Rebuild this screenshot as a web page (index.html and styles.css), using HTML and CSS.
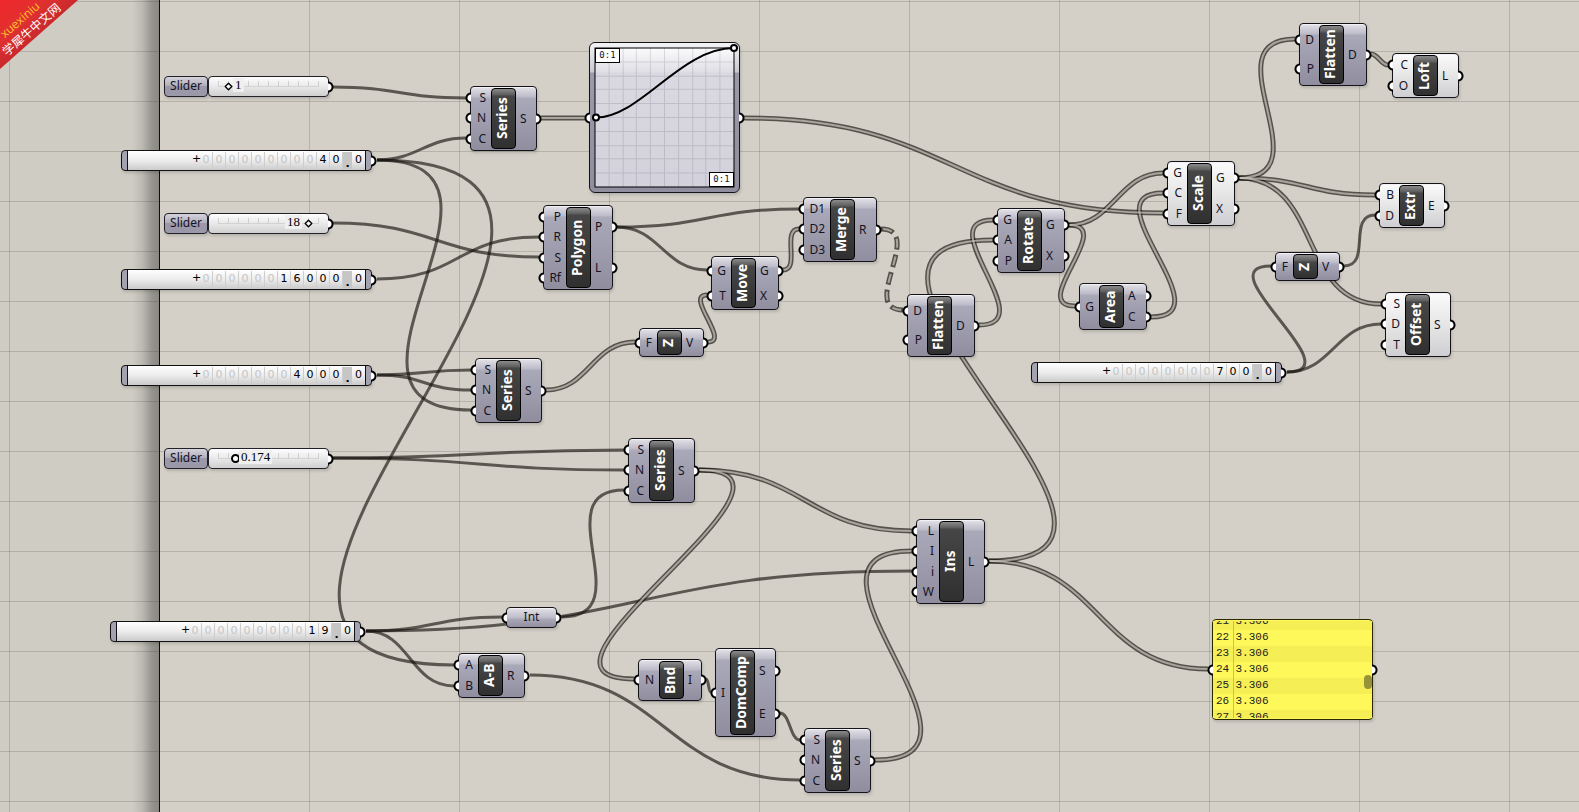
FILE: index.html
```
<!DOCTYPE html>
<html lang="en">
<head>
<meta charset="utf-8">
<title>Node canvas</title>
<link rel="stylesheet" href="styles.css">
</head>
<body>
<main class="canvas">
  <div class="margin"></div>

  <svg class="wires" aria-hidden="true">
    <defs>
      <path id="w1" d="M541 118C563 118 563 118 585 118"/>
      <path id="w2" d="M744 118C954 118 953 213 1163 213"/>
      <path id="w3" d="M783 270C801 270 781 229 799 229"/>
      <path id="w4" d="M546 390C589 390 592 342 635 342"/>
      <path id="w5" d="M708 342C731 342 684 295 707 295"/>
      <path id="w6" d="M979 325C1044 325 928 220 993 220"/>
      <path id="w7" d="M1069 225C1113 225 1119 173 1163 173"/>
      <path id="w8" d="M1069 225C1117 225 1027 306 1075 306"/>
      <path id="w9" d="M1151 317C1228 317 1086 193 1163 193"/>
      <path id="w10" d="M1239 178C1327 178 1207 39 1295 39"/>
      <path id="w11" d="M1239 178C1307 178 1307 195 1375 195"/>
      <path id="w12" d="M1239 178C1322 178 1298 304 1381 304"/>
      <path id="w13" d="M1371 54C1378 54 1381 65 1388 65"/>
      <path id="w14" d="M699 470C806 470 805 531 912 531"/>
      <path id="w15" d="M699 470C839 470 494 679 634 679"/>
      <path id="w16" d="M875 760C1017 760 770 551 912 551"/>
      <path id="w17" d="M989 561C1101 561 1096 669 1208 669"/>
      <path id="w18" d="M989 561C1214 561 768 240 993 240"/>
      <path id="w19" d="M881 229C926 229 858 310 903 310"/>
    </defs>
    <g class="single">
      <path d="M333 87C399 87 400 98 466 98"/>
      <path d="M377 160C418 160 425 138 466 138"/>
      <path d="M377 160C550 160 298 410 471 410"/>
      <path d="M377 160C741 160 90 665 454 665"/>
      <path d="M333 223C436 223 436 257 539 257"/>
      <path d="M377 279C462 279 454 237 539 237"/>
      <path d="M377 375C424 375 424 370 471 370"/>
      <path d="M377 375C424 375 424 390 471 390"/>
      <path d="M333 458C478 458 479 450 624 450"/>
      <path d="M333 458C478 458 479 470 624 470"/>
      <path d="M366 631C434 631 434 617 502 617"/>
      <path d="M366 631C639 631 639 571 912 571"/>
      <path d="M366 631C410 631 410 686 454 686"/>
      <path d="M530 675C665 675 665 780 800 780"/>
      <path d="M562 617C643 617 543 490 624 490"/>
      <path d="M617 227C708 227 708 209 799 209"/>
      <path d="M617 227C660 227 664 270 707 270"/>
      <path d="M1344 266C1372 266 1347 215 1375 215"/>
      <path d="M1287 372C1355 372 1203 266 1271 266"/>
      <path d="M1287 372C1332 372 1336 324 1381 324"/>
      <path d="M706 679C709 679 708 692 711 692"/>
      <path d="M780 713C790 713 790 740 800 740"/>
    </g>
    <g class="double">
      <use href="#w1"/><use href="#w2"/><use href="#w3"/><use href="#w4"/><use href="#w5"/><use href="#w6"/>
      <use href="#w7"/><use href="#w8"/><use href="#w9"/><use href="#w10"/><use href="#w11"/><use href="#w12"/>
      <use href="#w13"/><use href="#w14"/><use href="#w15"/><use href="#w16"/><use href="#w17"/><use href="#w18"/>
      <use class="dash" href="#w19"/>
    </g>
    <g class="core">
      <use href="#w1"/><use href="#w2"/><use href="#w3"/><use href="#w4"/><use href="#w5"/><use href="#w6"/>
      <use href="#w7"/><use href="#w8"/><use href="#w9"/><use href="#w10"/><use href="#w11"/><use href="#w12"/>
      <use href="#w13"/><use href="#w14"/><use href="#w15"/><use href="#w16"/><use href="#w17"/><use href="#w18"/>
      <use class="dash-core" href="#w19"/>
    </g>
  </svg>

  <div class="slider slider-start">
    <label class="slider-name" for="s1">Slider</label>
    <div class="slider-body out"><input id="s1" type="range" min="0" max="100" value="10"><output class="slider-value" for="s1">1</output></div>
  </div>
  <div class="slider slider-sides">
    <label class="slider-name" for="s2">Slider</label>
    <div class="slider-body out"><input id="s2" type="range" min="0" max="100" value="90"><output class="slider-value" for="s2">18</output></div>
  </div>
  <div class="slider slider-step">
    <label class="slider-name" for="s3">Slider</label>
    <div class="slider-body out"><input id="s3" class="round" type="range" min="0" max="100" value="17"><output class="slider-value" for="s3">0.174</output></div>
  </div>

  <div class="scroller sc-40 out"><span class="sign">+</span><i>0</i><i>0</i><i>0</i><i>0</i><i>0</i><i>0</i><i>0</i><i>0</i><i>0</i><b>4</b><b>0</b><span class="point">.</span><b>0</b></div>
  <div class="scroller sc-16000 out"><span class="sign">+</span><i>0</i><i>0</i><i>0</i><i>0</i><i>0</i><i>0</i><b>1</b><b>6</b><b>0</b><b>0</b><b>0</b><span class="point">.</span><b>0</b></div>
  <div class="scroller sc-4000 out"><span class="sign">+</span><i>0</i><i>0</i><i>0</i><i>0</i><i>0</i><i>0</i><i>0</i><b>4</b><b>0</b><b>0</b><b>0</b><span class="point">.</span><b>0</b></div>
  <div class="scroller sc-19 out"><span class="sign">+</span><i>0</i><i>0</i><i>0</i><i>0</i><i>0</i><i>0</i><i>0</i><i>0</i><i>0</i><b>1</b><b>9</b><span class="point">.</span><b>0</b></div>
  <div class="scroller sc-700 out"><span class="sign">+</span><i>0</i><i>0</i><i>0</i><i>0</i><i>0</i><i>0</i><i>0</i><i>0</i><b>7</b><b>0</b><b>0</b><span class="point">.</span><b>0</b></div>

  <section class="node series-a"><ul class="ins"><li>S</li><li>N</li><li>C</li></ul><h2>Series</h2><ul class="outs"><li>S</li></ul></section>
  <section class="node series-b"><ul class="ins"><li>S</li><li>N</li><li>C</li></ul><h2>Series</h2><ul class="outs"><li>S</li></ul></section>
  <section class="node series-c"><ul class="ins"><li>S</li><li>N</li><li>C</li></ul><h2>Series</h2><ul class="outs"><li>S</li></ul></section>
  <section class="node series-d"><ul class="ins"><li>S</li><li>N</li><li>C</li></ul><h2>Series</h2><ul class="outs"><li>S</li></ul></section>
  <section class="node polygon"><ul class="ins"><li>P</li><li>R</li><li>S</li><li>Rf</li></ul><h2>Polygon</h2><ul class="outs"><li>P</li><li>L</li></ul></section>
  <section class="node move"><ul class="ins"><li>G</li><li>T</li></ul><h2>Move</h2><ul class="outs"><li>G</li><li>X</li></ul></section>
  <section class="node merge"><ul class="ins"><li>D1</li><li>D2</li><li>D3</li></ul><h2>Merge</h2><ul class="outs"><li>R</li></ul></section>
  <section class="node flatten-a"><ul class="ins"><li>D</li><li>P</li></ul><h2>Flatten</h2><ul class="outs"><li>D</li></ul></section>
  <section class="node flatten-b"><ul class="ins"><li>D</li><li>P</li></ul><h2>Flatten</h2><ul class="outs"><li>D</li></ul></section>
  <section class="node rotate"><ul class="ins"><li>G</li><li>A</li><li>P</li></ul><h2>Rotate</h2><ul class="outs"><li>G</li><li>X</li></ul></section>
  <section class="node area"><ul class="ins"><li>G</li></ul><h2>Area</h2><ul class="outs"><li>A</li><li>C</li></ul></section>
  <section class="node pale scale"><ul class="ins"><li>G</li><li>C</li><li>F</li></ul><h2>Scale</h2><ul class="outs"><li>G</li><li>X</li></ul></section>
  <section class="node pale loft"><ul class="ins"><li>C</li><li>O</li></ul><h2>Loft</h2><ul class="outs"><li>L</li></ul></section>
  <section class="node pale extr"><ul class="ins"><li>B</li><li>D</li></ul><h2>Extr</h2><ul class="outs"><li>E</li></ul></section>
  <section class="node pale offset"><ul class="ins"><li>S</li><li>D</li><li>T</li></ul><h2>Offset</h2><ul class="outs"><li>S</li></ul></section>
  <section class="node unit-a"><ul class="ins"><li>F</li></ul><h2>Z</h2><ul class="outs"><li>V</li></ul></section>
  <section class="node unit-b"><ul class="ins"><li>F</li></ul><h2>Z</h2><ul class="outs"><li>V</li></ul></section>
  <section class="node insert"><ul class="ins"><li>L</li><li>I</li><li>i</li><li>W</li></ul><h2>Ins</h2><ul class="outs"><li>L</li></ul></section>
  <section class="node bounds"><ul class="ins"><li>N</li></ul><h2>Bnd</h2><ul class="outs"><li>I</li></ul></section>
  <section class="node domain"><ul class="ins"><li>I</li></ul><h2>DomComp</h2><ul class="outs"><li>S</li><li>E</li></ul></section>
  <section class="node minus"><ul class="ins"><li>A</li><li>B</li></ul><h2>A-B</h2><ul class="outs"><li>R</li></ul></section>
  <section class="param in out">Int</section>

  <section class="graph in out">
    <svg class="plot" viewBox="0 0 138 138">
      <defs>
        <linearGradient id="pf" x1="0" y1="0" x2="0" y2="1"><stop offset="0" stop-color="#fbfbfc"/><stop offset=".17" stop-color="#e0dfe6"/><stop offset=".18" stop-color="#dad9e1"/><stop offset="1" stop-color="#d3d1db"/></linearGradient>
      </defs>
      <rect class="plot-bg" width="138" height="138" fill="url(#pf)"/>
      <path class="plot-grid" d="M14 0V138M28 0V138M41 0V138M55 0V138M69 0V138M83 0V138M97 0V138M110 0V138M124 0V138M0 14H138M0 28H138M0 41H138M0 55H138M0 69H138M0 83H138M0 97H138M0 110H138M0 124H138"/>
      <rect class="plot-frame" width="138" height="138"/>
      <path class="plot-curve" d="M1 69C45 69 85 0 138 0"/>
      <circle class="knob" cx="1" cy="69" r="3"/><circle class="knob" cx="138" cy="0" r="3"/>
    </svg>
    <span class="range range-y">0:1</span>
    <span class="range range-x">0:1</span>
  </section>

  <section class="panel in out">
    <div class="panel-view">
      <table>
        <tr><th scope="row">21</th><td>3.306</td></tr>
        <tr><th scope="row">22</th><td>3.306</td></tr>
        <tr><th scope="row">23</th><td>3.306</td></tr>
        <tr><th scope="row">24</th><td>3.306</td></tr>
        <tr><th scope="row">25</th><td>3.306</td></tr>
        <tr><th scope="row">26</th><td>3.306</td></tr>
        <tr><th scope="row">27</th><td>3.306</td></tr>
      </table>
      <span class="thumb"></span>
    </div>
  </section>

  <aside class="ribbon"><span class="ribbon-latin">xuexiniu</span><span class="ribbon-cjk" lang="zh">学犀牛中文网</span></aside>
</main>
</body>
</html>
```
FILE: styles.css
```
* { box-sizing: border-box; }
body { margin: 0; font: 12px/16px "Noto Sans", "Open Sans", sans-serif; color: #15131f; }
.canvas {
  position: relative;
  min-height: 100vh;
  overflow: hidden;
  background-color: #d4d0c8;
}
.canvas::after {
  content: "";
  position: absolute;
  inset: 0;
  z-index: 1;
  background:
    repeating-linear-gradient(to bottom, transparent 0 1px, rgba(60, 60, 50, .2) 1px 2px, transparent 2px 50px),
    repeating-linear-gradient(to right, transparent 0 9px, rgba(60, 60, 50, .2) 9px 10px, transparent 10px 150px);
}
.margin {
  position: absolute;
  inset: 0 auto 0 0;
  width: 160px;
  border-right: 1px solid #000;
  background: linear-gradient(to right, #cfccc4 132px, #bdbab3 142px, #96948e 152px, #8a8882);
}
.wires { position: absolute; inset: 0; z-index: 2; width: 100%; height: 100%; fill: none; }
.single { stroke: rgba(20, 17, 12, .64); stroke-width: 3; }
.double { stroke: rgba(20, 17, 12, .66); stroke-width: 5; }
.core { stroke: rgba(205, 201, 192, .7); stroke-width: 2; }
.dash { stroke-dasharray: 13 5; }
.dash-core { stroke-dasharray: 9 9; stroke-dashoffset: -2; }

/* Components */
.node, .param, .graph, .panel, .slider, .scroller { position: absolute; z-index: 3; }
.node, .param, .graph {
  border: 1px solid #14131a;
  border-radius: 4px;
  background: linear-gradient(to bottom, #e4e3e9 0, #bbbac7 10px, #aaa9b9 11px, #8f8d9e 100%);
  box-shadow: inset 0 1px 0 #f2f2f6, 1px 2px 3px rgba(0, 0, 0, .14);
}
.node { display: grid; grid-template-columns: 19px 25px 1fr; }
.node.pale { background: linear-gradient(to bottom, #fbfbfb 0, #e6e6e6 50%, #cfcfd3 100%); }
.node ul { display: flex; flex-direction: column; margin: 0; padding: 1px 0; list-style: none; }
.node li { position: relative; flex: 1; display: flex; align-items: center; }
.ins li { justify-content: flex-end; padding-right: 5px; }
.outs li { padding-left: 4px; }
.node h2 {
  display: flex;
  align-items: center;
  justify-content: center;
  margin: 1px 0;
  padding-left: 3px;
  border: 1px solid #000;
  border-radius: 4px;
  overflow: hidden;
  background: linear-gradient(to top, #8b8b8b 0, #5c5c5c 6px, #464646 7px, #303030 100%);
  color: #fff;
  font-size: 14px;
  line-height: 20px;
  font-weight: 700;
  writing-mode: vertical-rl;
  rotate: 180deg;
}

/* Connection grips */
.ins li::before, .outs li::after, .in::before, .out::after {
  content: "";
  position: absolute;
  top: calc(50% - 6px);
  width: 6px;
  height: 12px;
}
.ins li::before, .in::before {
  left: -6px;
  background: radial-gradient(circle at 100% 50%, #fff 3px, #000 4px 5px, transparent 6px);
}
.outs li::after, .out::after {
  right: -6px;
  background: radial-gradient(circle at 0 50%, #fff 3px, #000 4px 5px, transparent 6px);
}

.series-a { left: 470px; top: 86px; width: 67px; height: 65px; }
.series-b { left: 475px; top: 358px; width: 67px; height: 65px; }
.series-c { left: 628px; top: 438px; width: 67px; height: 65px; }
.series-d { left: 804px; top: 728px; width: 67px; height: 65px; }
.series-a, .series-b, .series-c, .series-d, .bounds, .loft { grid-template-columns: 20px 25px 1fr; }
.polygon { left: 543px; top: 205px; width: 70px; height: 85px; }
.insert { left: 916px; top: 519px; width: 69px; height: 85px; }
.polygon, .insert { grid-template-columns: 22px 25px 1fr; }
.move { left: 711px; top: 256px; width: 68px; height: 54px; }
.merge { left: 803px; top: 197px; width: 74px; height: 65px; grid-template-columns: 26px 25px 1fr; }
.flatten-a { left: 907px; top: 294px; width: 68px; height: 63px; }
.flatten-b { left: 1299px; top: 23px; width: 68px; height: 63px; }
.rotate { left: 997px; top: 208px; width: 68px; height: 65px; }
.area { left: 1079px; top: 283px; width: 68px; height: 47px; }
.scale { left: 1167px; top: 161px; width: 68px; height: 65px; }
.loft { left: 1392px; top: 53px; width: 67px; height: 45px; }
.extr { left: 1379px; top: 183px; width: 66px; height: 45px; }
.offset { left: 1385px; top: 292px; width: 66px; height: 65px; }
.unit-a { left: 639px; top: 328px; width: 65px; height: 29px; }
.unit-b { left: 1275px; top: 252px; width: 65px; height: 29px; }
.unit-a, .unit-b { grid-template-columns: 17px 25px 1fr; }
.bounds { left: 638px; top: 659px; width: 64px; height: 42px; }
.domain { left: 715px; top: 648px; width: 61px; height: 89px; grid-template-columns: 14px 25px 1fr; }
.minus { left: 458px; top: 653px; width: 67px; height: 45px; }
.param { left: 506px; top: 607px; width: 51px; height: 21px; line-height: 18px; text-align: center; }

/* Range sliders */
.slider { display: flex; left: 164px; height: 21px; }
.slider-start { top: 76px; }
.slider-sides { top: 213px; }
.slider-step { top: 448px; }
.slider-name, .slider-body { border: 1px solid #222129; border-radius: 4px; box-shadow: 1px 2px 3px rgba(0, 0, 0, .14); }
.slider-name {
  width: 44px;
  text-align: center;
  line-height: 18px;
  background: linear-gradient(to bottom, #d5d4dc 0, #b0afbe 45%, #9a98a9 50%, #9a98a9 100%);
}
.slider-body {
  position: relative;
  width: 121px;
  padding: 0 5px;
  background: linear-gradient(to bottom, #fdfdfd, #e9e9e9 50%, #cfcfd0);
}
.slider-body input {
  appearance: none;
  display: block;
  width: 109px;
  height: 19px;
  margin: 0;
  background:
    repeating-linear-gradient(to right, #cfcfcf 0 1px, transparent 1px 10px) 4px 4px / 101px 6px no-repeat,
    linear-gradient(#d3d3d3, #d3d3d3) 4px 9px / 101px 1px no-repeat;
}
.slider-body input::-webkit-slider-thumb {
  appearance: none;
  width: 9px;
  height: 9px;
  border: 2px solid #000;
  background: #fff;
  border-radius: 1px;
  transform: rotate(45deg) scale(.67);
}
.slider-body .round::-webkit-slider-thumb { border-radius: 50%; transform: none; }
.slider-value {
  position: absolute;
  top: 1px;
  left: 24px;
  padding: 0 2px;
  background: #efefef;
  font: 13px/14px "Liberation Serif", serif;
  color: #000;
}
.slider-sides .slider-value { left: 76px; }
.slider-step .slider-value { left: 30px; }

/* Digit scrollers */
.scroller {
  display: flex;
  justify-content: flex-end;
  width: 251px;
  height: 21px;
  padding-right: 6px;
  border: 1px solid #111;
  border-radius: 4px;
  background:
    linear-gradient(to right, #a3a2b0 5px, #111 5px 6px, transparent 6px calc(100% - 6px), #111 calc(100% - 6px) calc(100% - 5px), #a3a2b0 calc(100% - 5px)),
    linear-gradient(to bottom, #fff, #ececec 50%, #cbcbcb);
  font: 11px/16px "DejaVu Sans", sans-serif;
  color: #000;
  box-shadow: 1px 2px 3px rgba(0, 0, 0, .14);
}
.scroller i, .scroller b {
  width: 13px;
  height: 17px;
  margin-top: 1px;
  border-right: 1px solid #cdcdcd;
  font-style: normal;
  font-weight: 400;
  text-align: center;
}
.scroller i { color: #c4c4c4; }
.scroller b:last-child { border: 0; }
.sign { width: 8px; text-align: center; line-height: 15px; }
.point { width: 9px; height: 17px; margin-top: 1px; background: #c6c6c6; text-align: center; line-height: 24px; font-weight: 700; }
.sc-40 { left: 121px; top: 150px; }
.sc-16000 { left: 121px; top: 269px; }
.sc-4000 { left: 121px; top: 365px; }
.sc-19 { left: 110px; top: 621px; }
.sc-700 { left: 1031px; top: 362px; }

/* Graph mapper */
.graph {
  left: 589px;
  top: 42px;
  width: 151px;
  height: 151px;
  padding: 5px;
  border-radius: 6px;
  background: linear-gradient(to bottom, #f4f4f7 0, #c9c8d2 29px, #9b99aa 30px, #8f8d9e 100%);
}
.plot { display: block; width: 100%; overflow: visible; }
.plot-grid { stroke: rgba(60, 60, 90, .16); stroke-width: 1; fill: none; }
.plot-frame { fill: none; stroke: #000; stroke-width: 1; }
.plot-curve { fill: none; stroke: #000; stroke-width: 2; }
.knob { fill: #fff; stroke: #000; stroke-width: 2; }
.range {
  position: absolute;
  width: 25px;
  height: 15px;
  border: 1px solid #000;
  background: #fff;
  font: 9px/13px "DejaVu Sans Mono", monospace;
  text-align: center;
}
.range-y { left: 5px; top: 5px; }
.range-x { right: 5px; bottom: 5px; }

/* Text panel */
.panel {
  left: 1212px;
  top: 619px;
  width: 161px;
  height: 101px;
  border: 1px solid #2a2800;
  border-radius: 4px;
  background: #fff85a;
  box-shadow: 1px 2px 3px rgba(0, 0, 0, .14);
}
.panel-view { position: relative; display: flex; align-items: center; height: 97px; margin-top: 1px; overflow: hidden; }
.panel table { width: 100%; border-collapse: collapse; font: 11px/14px "Liberation Mono", monospace; color: #222; }
.panel tr:nth-child(odd) { background: #f5ee54; }
.panel th, .panel td { height: 16px; padding: 0 0 2px 2px; font-weight: 400; text-align: left; }
.panel th { width: 20px; padding-left: 3px; border-right: 1px solid #c9c348; }
.thumb { position: absolute; right: 0; top: 54px; width: 8px; height: 14px; border-radius: 4px; background: #98933a; }

/* Corner ribbon */
.ribbon {
  position: absolute;
  left: 0;
  top: 0;
  z-index: 4;
  width: 78px;
  height: 69px;
  clip-path: polygon(0 0, 100% 0, 0 100%);
  background: linear-gradient(to bottom right, #f0282a, #e03030 30%, #c9292d 50%);
}
.ribbon span { position: absolute; white-space: nowrap; translate: -50% -50%; rotate: -41deg; }
.ribbon-latin { left: 20px; top: 20px; color: #ffc02a; font: 12px/12px "Open Sans", sans-serif; }
.ribbon-cjk { left: 31px; top: 29px; color: #fff; font: 12px/12px "Noto Sans CJK SC", sans-serif; }
```
